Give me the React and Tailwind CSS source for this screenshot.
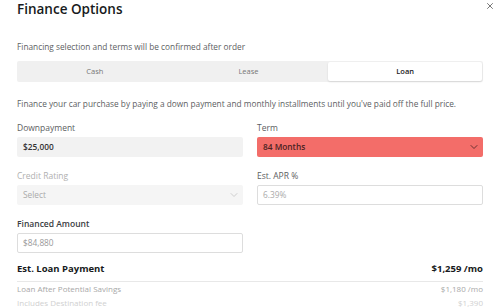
import { ChevronDown, X } from "lucide-react";

const Label = ({ children, muted, strong }) => (
  <div
    className={`text-[8.5px] leading-[11px] mb-[4px] ${
      muted ? "text-[#b0b0b0]" : strong ? "text-[#393c41] font-semibold" : "text-[#5c5e62]"
    }`}
  >
    {children}
  </div>
);

export default function App() {
  return (
    <div
      className="w-[500px] h-[308px] overflow-hidden bg-white px-[17px] text-[#393c41]"
      style={{ fontFamily: '"Open Sans", "Liberation Sans", sans-serif' }}
    >
      <div className="flex items-start justify-between h-[20px]">
        <h1 className="text-[13.5px] leading-[19px] font-semibold text-[#171a20]">Finance Options</h1>
        <X className="w-[10px] h-[10px] mt-[1px] -mr-[12px] text-[#333]" strokeWidth={1.6} />
      </div>

      <p className="mt-[21px] text-[8.3px] leading-[12px] text-[#5c5e62]">
        Financing selection and terms will be confirmed after order
      </p>

      <div className="mt-[8px] flex h-[21px] rounded-[2px] bg-[#f0f0f0] p-[1px] text-[7.5px]">
        <div className="flex-1 flex items-center justify-center text-[#777]">Cash</div>
        <div className="flex-1 flex items-center justify-center text-[#777]">Lease</div>
        <div className="flex-1 ml-[3px] flex items-center justify-center bg-white rounded-[2px] shadow-[0_1px_2px_rgba(0,0,0,0.12)] text-[#222] font-semibold">
          Loan
        </div>
      </div>

      <p className="mt-[16px] text-[8.3px] leading-[12px] text-[#5c5e62]">
        Finance your car purchase by paying a down payment and monthly installments until you've paid off the full price.
      </p>

      <div className="mt-[12px] grid grid-cols-2 gap-x-[14px]">
        <div>
          <Label>Downpayment</Label>
          <div className="h-[20px] bg-[#f2f2f2] rounded-[2px] flex items-center px-[6px] text-[8.3px] font-semibold text-[#333]">
            $25,000
          </div>
        </div>
        <div>
          <Label>Term</Label>
          <div className="h-[20px] bg-[#f36d69] rounded-[2px] flex items-center justify-between pl-[6px] pr-[3px] text-[8.3px] font-semibold text-[#4a2222]">
            84 Months
            <ChevronDown className="w-[12px] h-[12px] text-[#5a2a2a]" strokeWidth={1.8} />
          </div>
        </div>

        <div className="mt-[13px]">
          <Label muted>Credit Rating</Label>
          <div className="h-[20px] bg-[#f5f5f5] rounded-[2px] flex items-center justify-between pl-[6px] pr-[3px] text-[8.3px] text-[#aaa]">
            Select
            <ChevronDown className="w-[12px] h-[12px] text-[#c0c0c0]" strokeWidth={1.5} />
          </div>
        </div>
        <div className="mt-[13px]">
          <Label>Est. APR %</Label>
          <div className="h-[20px] bg-white border border-[#ddd] rounded-[2px] flex items-center px-[5px] text-[8.3px] text-[#aaa]">
            6.39%
          </div>
        </div>

        <div className="mt-[13px]">
          <Label strong>Financed Amount</Label>
          <div className="h-[20px] bg-white border border-[#ddd] rounded-[2px] flex items-center px-[5px] text-[8.3px] text-[#999]">
            $84,880
          </div>
        </div>
      </div>

      <div className="mt-[9px] flex items-center justify-between leading-[14px] pb-[5px] border-b border-[#e8e8e8] text-[9.5px] font-bold text-[#171a20]">
        <span>Est. Loan Payment</span>
        <span>$1,259 /mo</span>
      </div>
      <div className="mt-[1px] flex justify-between leading-[12px] text-[8px] text-[#a8a8a8]">
        <span>Loan After Potential Savings</span>
        <span>$1,180 /mo</span>
      </div>
      <div className="mt-[2px] flex justify-between leading-[12px] text-[8px] text-[#d0d0d0]">
        <span>Includes Destination fee</span>
        <span>$1,390</span>
      </div>
    </div>
  );
}
